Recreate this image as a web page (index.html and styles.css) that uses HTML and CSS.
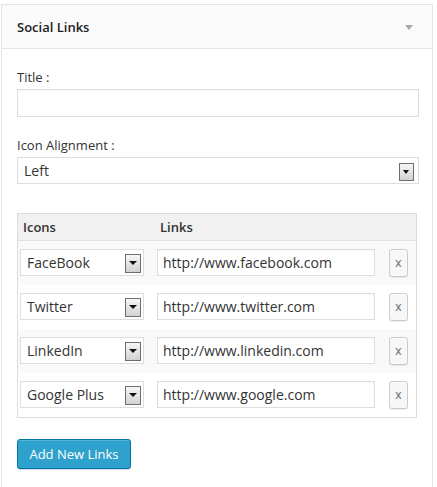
FILE: index.html
```html
<!DOCTYPE html>
<html>
<head>
<meta charset="utf-8">
<link rel="stylesheet" href="styles.css">
</head>
<body>
<div class="widget">
  <div class="widget-top">
    <h3 class="widget-title">Social Links</h3>
    <span class="toggle"></span>
  </div>
  <div class="widget-inside">
    <label class="field-label">Title :</label>
    <div class="text-input wide"></div>
    <label class="field-label second">Icon Alignment :</label>
    <div class="select big"><span class="select-value">Left</span><span class="select-arrow"></span></div>

    <div class="links-table">
      <div class="links-head">
        <span class="head-cell">Icons</span>
        <span class="head-cell">Links</span>
        <span></span>
      </div>
      <div class="links-row odd">
        <div class="select"><span class="select-value">FaceBook</span><span class="select-arrow"></span></div>
        <div class="text-input url">http://www.facebook.com</div>
        <span class="remove">x</span>
      </div>
      <div class="links-row">
        <div class="select"><span class="select-value">Twitter</span><span class="select-arrow"></span></div>
        <div class="text-input url">http://www.twitter.com</div>
        <span class="remove">x</span>
      </div>
      <div class="links-row odd">
        <div class="select"><span class="select-value">LinkedIn</span><span class="select-arrow"></span></div>
        <div class="text-input url">http://www.linkedin.com</div>
        <span class="remove">x</span>
      </div>
      <div class="links-row">
        <div class="select"><span class="select-value">Google Plus</span><span class="select-arrow"></span></div>
        <div class="text-input url">http://www.google.com</div>
        <span class="remove">x</span>
      </div>
    </div>

    <button class="add-button">Add New Links</button>
  </div>
</div>
</body>
</html>
```

FILE: styles.css
```css
html, body {
  margin: 0;
  padding: 0;
  background: #ffffff;
}
body {
  font-family: "Open Sans", "Liberation Sans", sans-serif;
  color: #333333;
  font-size: 13px;
  padding: 4px 0 0 1px;
}
.widget {
  width: 432px;
  box-sizing: border-box;
  border: 1px solid #e5e5e5;
  border-bottom: none;
  background: #fff;
  min-height: 490px;
}
.widget-top {
  height: 43px;
  background: #fafafa;
  border-bottom: 1px solid #e5e5e5;
  display: flex;
  align-items: center;
  justify-content: space-between;
  padding: 0 19px 0 15px;
}
.widget-title {
  margin: 0;
  font-size: 13px;
  font-weight: 600;
  color: #222;
  line-height: 18px;
}
.toggle {
  width: 0;
  height: 0;
  border-left: 4px solid transparent;
  border-right: 4px solid transparent;
  border-top: 5px solid #a8a8a8;
  margin-top: 1px;
}
.widget-inside {
  padding: 19px 0 0 15px;
  display: flex;
  flex-direction: column;
  align-items: flex-start;
}
.field-label {
  display: block;
  line-height: 18px;
  font-size: 13px;
  color: #333;
  margin-bottom: 3px;
}
.field-label.second {
  margin-top: 19px;
}
.text-input {
  box-sizing: border-box;
  border: 1px solid #dddddd;
  box-shadow: inset 0 1px 2px rgba(0,0,0,0.04);
  background: #fff;
  height: 28px;
}
.wide {
  width: 402px;
}
.select {
  position: relative;
  box-sizing: border-box;
  border: 1px solid #dddddd;
  background: #fff;
  height: 27px;
  width: 124px;
  display: flex;
  align-items: center;
  padding-left: 6px;
  font-size: 14px;
  color: #333;
}
.select.big {
  width: 402px;
  padding-left: 6px;
}
.select-value {
  line-height: 18px;
}
.select-arrow {
  position: absolute;
  right: 2px;
  top: 4px;
  width: 16px;
  height: 19px;
  box-sizing: border-box;
  border: 1px solid #6f6f6f;
  background: linear-gradient(#f6f6f6, #d2d2d2);
}
.select-arrow::after {
  content: "";
  position: absolute;
  left: 3px;
  top: 6px;
  border-left: 4px solid transparent;
  border-right: 4px solid transparent;
  border-top: 4px solid #111;
}
.select.big .select-arrow {
  right: 4px;
  top: 5px;
  width: 15px;
  height: 18px;
}
.select.big .select-arrow::after {
  left: 3px;
  top: 6px;
  border-left-width: 3.5px;
  border-right-width: 3.5px;
}
.links-table {
  margin-top: 29px;
  width: 400px;
  box-sizing: border-box;
  border: 1px solid #dcdcdc;
}
.links-head,
.links-row {
  display: grid;
  grid-template-columns: 124px 218px 19px;
  column-gap: 13px;
  padding-left: 2px;
}
.links-head {
  height: 26px;
  background: #f1f1f1;
  border-bottom: 1px solid #e1e1e1;
  align-items: center;
}
.head-cell {
  font-weight: 600;
  font-size: 13px;
  color: #333;
  padding-left: 3px;
  line-height: 18px;
}
.links-row {
  height: 44px;
  box-sizing: border-box;
  padding-top: 8px;
  background: #fff;
}
.links-row.odd {
  background: #f9f9f9;
}
.links-row > .remove {
  margin-left: 1px;
}
.url {
  height: 27px;
  width: 218px;
  display: flex;
  align-items: center;
  padding-left: 5px;
  font-size: 14px;
  color: #333;
}
.remove {
  box-sizing: border-box;
  width: 19px;
  height: 28px;
  border: 1px solid #cccccc;
  border-radius: 3px;
  background: #f7f7f7;
  box-shadow: inset 0 1px 0 #fff, 0 1px 0 rgba(0,0,0,0.08);
  color: #666;
  font-size: 12px;
  display: flex;
  align-items: center;
  justify-content: center;
  line-height: 1;
}
.add-button {
  margin-top: 21px;
  height: 30px;
  width: 114px;
  box-sizing: border-box;
  border: 1px solid #0074a2;
  border-radius: 3px;
  background: #2ea2cc;
  box-shadow: inset 0 1px 0 rgba(120,200,230,0.5), 0 1px 0 rgba(0,0,0,0.15);
  color: #fff;
  font-family: "Open Sans", "Liberation Sans", sans-serif;
  font-size: 13px;
  padding: 0;
  line-height: 28px;
}
```
